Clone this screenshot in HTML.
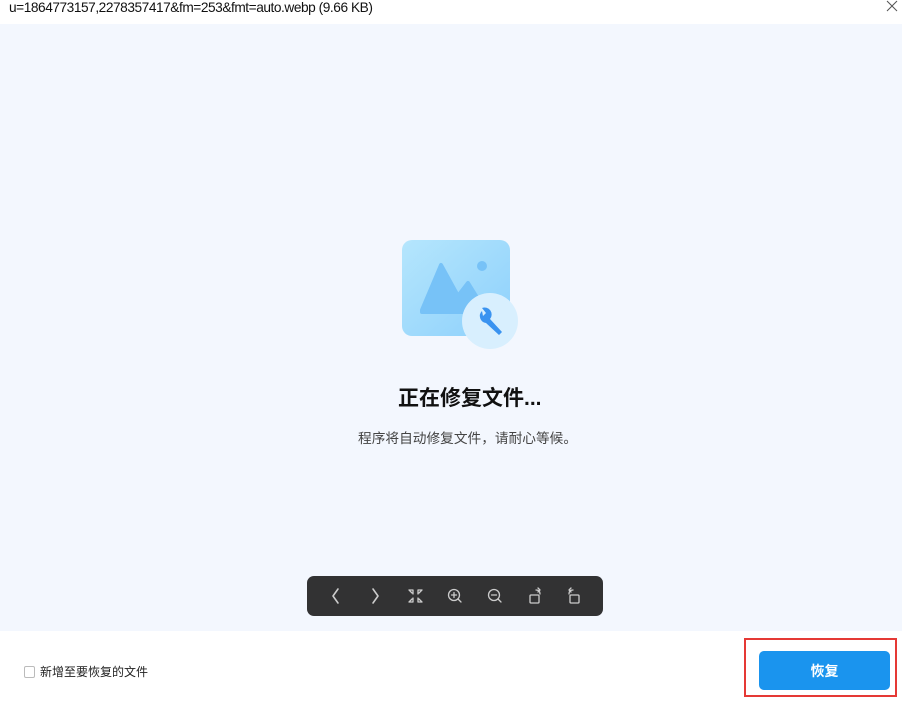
<!DOCTYPE html>
<html><head><meta charset="utf-8"><style>
*{margin:0;padding:0;box-sizing:border-box}
body{width:902px;height:701px;background:#fff;position:relative;overflow:hidden;font-family:"Liberation Sans","Noto Sans CJK SC",sans-serif}
.t{position:absolute;left:9px;top:0px;font-size:13.7px;color:#111;letter-spacing:-0.45px}
.x{position:absolute;left:886px;top:0px}
.main{position:absolute;left:0;top:24px;width:902px;height:607px;background:#f3f7fe}
.h{position:absolute;left:398px;top:382px;font-size:21px;font-weight:bold;color:#111;white-space:nowrap}
.s{position:absolute;left:358px;top:427px;font-size:13.7px;color:#444;white-space:nowrap}
.bar{position:absolute;left:307px;top:576px;width:296px;height:40px;background:#323233;border-radius:7px}
.cb{position:absolute;left:24px;top:666px;width:11px;height:12px;border:1px solid #bbb;border-radius:2px;background:#fff}
.cl{position:absolute;left:40px;top:663px;font-size:12px;color:#222}
.red{position:absolute;left:744px;top:638px;width:153px;height:59px;border:2px solid #e53935}
.btn{position:absolute;left:759px;top:651px;width:131px;height:39px;background:#1a94ee;border-radius:5px;color:#fff;font-size:14px;font-weight:bold;text-align:center;line-height:41px}
</style></head><body>
<div class="t">u=1864773157,2278357417&amp;fm=253&amp;fmt=auto.webp (9.66 KB)</div>
<svg class="x" width="12" height="12"><path d="M1 1L11 11M11 1L1 11" stroke="#555" stroke-width="1"/></svg>
<div class="main"></div>
<svg style="position:absolute;left:400px;top:238px" width="120" height="112">
<defs><linearGradient id="g" x1="0" y1="0" x2="1" y2="1"><stop offset="0" stop-color="#b5e6fd"/><stop offset="1" stop-color="#8dd0fb"/></linearGradient></defs>
<rect x="2" y="2" width="108" height="96" rx="10" fill="url(#g)"/>
<circle cx="82" cy="28" r="5" fill="#77c2f7"/>
<path d="M22 72 L41 27 L58 58 L68 45 L86 74 L22 74 Z" fill="#77c2f7" stroke="#77c2f7" stroke-linejoin="round" stroke-width="4"/>
<circle cx="90" cy="83" r="28" fill="#d8effe"/>
<path d="M82 73 a7 7 0 0 0 4 12 l13 12 l3 -3 l-12 -13 a7 7 0 0 0 -8 -11 l4 5 l-3 3 z" fill="#3a93f0"/>
</svg>
<div class="h">正在修复文件...</div>
<div class="s">程序将自动修复文件，请耐心等候。</div>
<div class="bar">
<svg width="296" height="40" fill="none" stroke="#ccc" stroke-width="1.6" stroke-linecap="round" stroke-linejoin="round">
<path d="M31 13 l-5 7 l5 7"/><path d="M66 13 l5 7 l-5 7"/>
<g stroke-width="1.3"><path d="M102 14h4v4M115 14h-4v4M102 26h4v-4M115 26h-4v-4M102 14l3 3M115 14l-3 3M102 26l3-3M115 26l-3-3"/></g>
<circle cx="147" cy="19" r="5.5" stroke-width="1.3"/><path d="M151 23l3 3M147 16.5v5M144.5 19h5" stroke-width="1.3"/>
<circle cx="187" cy="19" r="5.5" stroke-width="1.3"/><path d="M191 23l3 3M184.5 19h5" stroke-width="1.3"/>
<rect x="223" y="19" width="9" height="8" rx="1" stroke-width="1.3"/><path d="M229 14 q4 0 4 4 M231 12l2 2-2 2" stroke-width="1.3"/>
<rect x="263" y="19" width="9" height="8" rx="1" stroke-width="1.3"/><path d="M266 14 q-4 0 -4 4 M264 12l-2 2 2 2" stroke-width="1.3"/>
</svg></div>
<div class="cb"></div>
<div class="cl">新增至要恢复的文件</div>
<div class="red"></div>
<div class="btn">恢复</div>
</body></html>
